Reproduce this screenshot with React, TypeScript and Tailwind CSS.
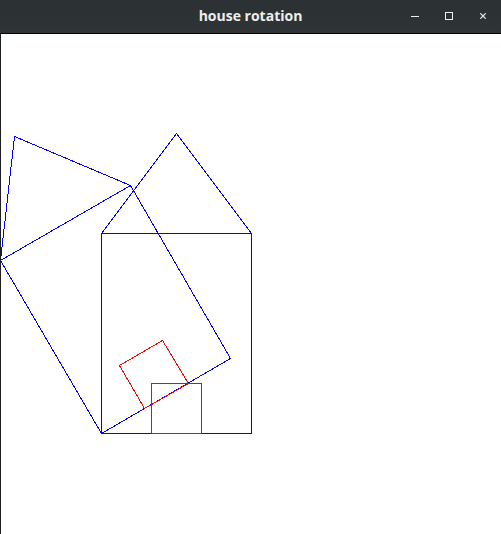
type Point = [number, number];

const BLUE = "#0000ff";
const RED = "#ff0000";

const shapes: { color: string; points: Point[] }[] = [
  { color: BLUE, points: [[100, 199], [250, 199], [250, 399], [100, 399]] },
  { color: BLUE, points: [[100, 199], [175, 99], [250, 199]] },
  { color: BLUE, points: [[100, 399], [229, 324], [129, 151], [-1, 226]] },
  { color: BLUE, points: [[-1, 226], [13, 102], [129, 151]] },
  { color: RED, points: [[150, 349], [200, 349], [200, 399], [150, 399]] },
  { color: RED, points: [[143, 374], [187, 349], [161, 306], [118, 331]] },
];

const toPoints = (points: Point[]) =>
  points.map(([x, y]) => `${x + 0.5},${y + 0.5}`).join(" ");

const buttonClass = "flex size-5 items-center justify-center text-[#eeeeec]";

function TitleBar() {
  return (
    <header className="grid h-[34px] grid-cols-[1fr_auto_1fr] items-center border-b border-black bg-linear-to-b from-[#2b3032] to-[#2f3437] pb-px">
      <h1 className="col-start-2 font-['Open_Sans','Noto_Sans',sans-serif] text-sm leading-5 font-bold text-[#eeeeec]">
        house rotation
      </h1>
      <div className="flex justify-end gap-[14px] pr-2">
        <button type="button" aria-label="Minimize" className={buttonClass}>
          <svg width="8" height="8" viewBox="0 0 8 8" shapeRendering="crispEdges" aria-hidden="true">
            <path d="M0 4.5H8" stroke="currentColor" />
          </svg>
        </button>
        <button type="button" aria-label="Maximize" className={buttonClass}>
          <svg width="8" height="8" viewBox="0 0 8 8" fill="none" shapeRendering="crispEdges" aria-hidden="true">
            <path d="M.5 .5H7.5V7.5H.5Z" stroke="currentColor" />
          </svg>
        </button>
        <button type="button" aria-label="Close" className={buttonClass}>
          <svg width="6" height="6" viewBox="0 0 6 6" aria-hidden="true">
            <path d="M.3 .3L5.7 5.7M5.7 .3L.3 5.7" stroke="currentColor" strokeWidth="1.2" />
          </svg>
        </button>
      </div>
    </header>
  );
}

export default function App() {
  return (
    <main className="flex min-h-screen flex-col bg-white">
      <TitleBar />
      <section className="flex-1 overflow-hidden border-l border-[#1c2022]">
        <svg
          className="block"
          width="500"
          height="500"
          viewBox="0 0 500 500"
          fill="none"
          shapeRendering="crispEdges"
          role="img"
          aria-label="House and rotated house"
        >
          {shapes.map(({ color, points }, i) => (
            <polygon key={i} points={toPoints(points)} stroke={color} />
          ))}
        </svg>
      </section>
    </main>
  );
}
